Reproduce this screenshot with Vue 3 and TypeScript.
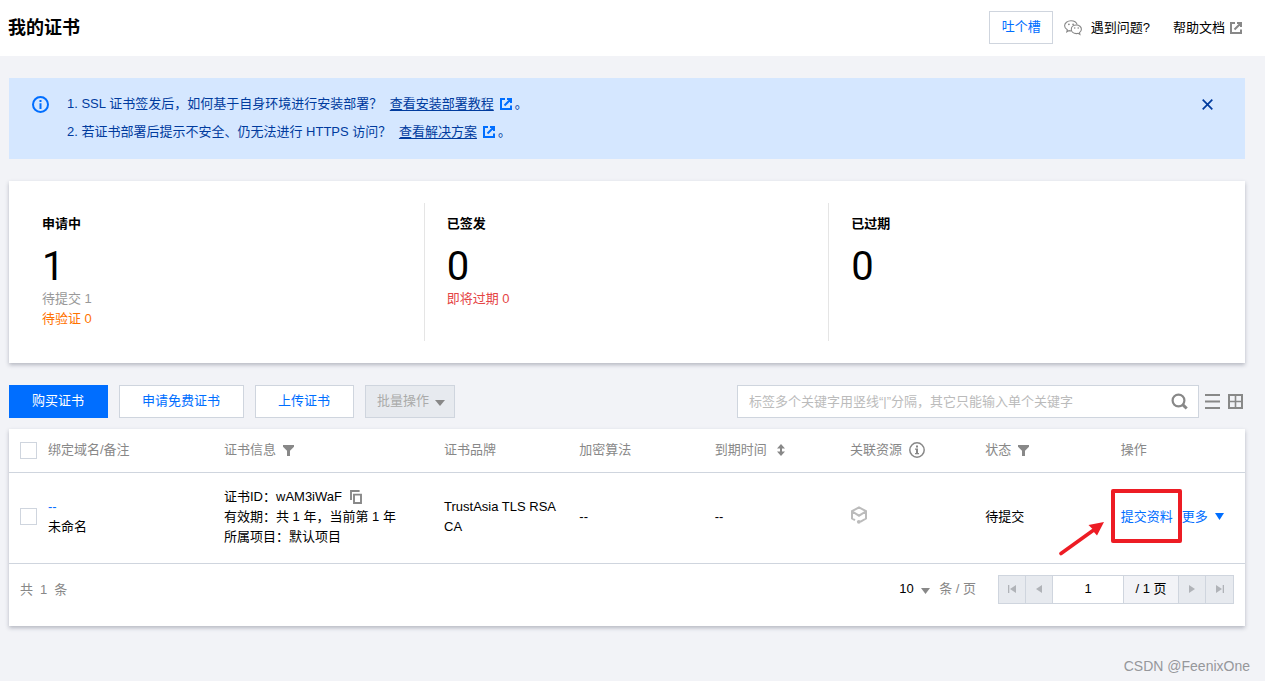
<script setup lang="ts">
import { ref } from 'vue'

interface Stat {
  title: string
  count: number
  notes: { text: string; tone: string }[]
}

interface Column {
  label: string
  icon?: 'filter' | 'sort' | 'info'
}

const stats: Stat[] = [
  {
    title: '申请中',
    count: 1,
    notes: [
      { text: '待提交 1', tone: 'muted' },
      { text: '待验证 0', tone: 'warning' },
    ],
  },
  { title: '已签发', count: 0, notes: [{ text: '即将过期 0', tone: 'danger' }] },
  { title: '已过期', count: 0, notes: [] },
]

const columns: Column[] = [
  { label: '绑定域名/备注' },
  { label: '证书信息', icon: 'filter' },
  { label: '证书品牌' },
  { label: '加密算法' },
  { label: '到期时间', icon: 'sort' },
  { label: '关联资源', icon: 'info' },
  { label: '状态', icon: 'filter' },
  { label: '操作' },
]

const noticeOpen = ref(true)
const keyword = ref('')
const page = ref('1')
const pageSize = ref('10')
</script>

<template>
  <div class="page">
    <header class="header">
      <h1 class="title">我的证书</h1>
      <div class="header-tools">
        <button type="button" class="btn feedback">吐个槽</button>
        <a href="#" class="help wechat">
          <svg width="18" height="16" viewBox="0 0 18 16" fill="none" stroke="#888" stroke-width="1.1">
            <path d="M7.2 10.9c-.9 0-1.5-.1-2.2-.3l-2.2 1.2.5-2C1.6 8.800.6 7.400.6 5.800.6 3 3.5.8 7 .8c3 0 5.500 1.600 6.200 3.900" />
            <path d="M12.400 5c-2.900 0-5.100 1.900-5.100 4.300s2.200 4.300 5.100 4.300c.6 0 1.200-.1 1.700-.3l1.800 1-.4-1.700c1.200-.8 1.900-2 1.900-3.300C17.400 6.900 15.200 5 12.400 5z" />
            <g fill="#888" stroke="none">
              <circle cx="4.900" cy="4.300" r=".9" /><circle cx="9.100" cy="4.300" r=".9" />
              <circle cx="10.700" cy="8" r=".8" /><circle cx="14.200" cy="8" r=".8" />
            </g>
          </svg>
          <span>遇到问题?</span>
        </a>
        <a href="#" class="help">
          <span>帮助文档</span>
          <svg width="12" height="12" viewBox="0 0 12 12" fill="none" stroke="#888" stroke-width="2">
            <path d="M5 1H1v10h10V7.500M7 1h4v4M10.800 1.200 4.500 7.500" />
          </svg>
        </a>
      </div>
    </header>

    <main class="content">
      <section v-if="noticeOpen" class="notice">
        <svg class="notice-icon" width="17" height="17" viewBox="0 0 17 17" fill="none">
          <circle cx="8.500" cy="8.500" r="7.500" stroke="#006eff" stroke-width="2" />
          <path d="M7.500 4h2v2h-2zM7.500 7.200h2v5.800h-2z" fill="#006eff" />
        </svg>
        <div class="notice-text">
          <p>
            1. SSL 证书签发后，如何基于自身环境进行安装部署？
            <a href="#">查看安装部署教程</a>
            <svg class="link-icon" width="12" height="12" viewBox="0 0 12 12" fill="none" stroke="#006eff" stroke-width="2">
              <path d="M5 1H1v10h10V7.500M7 1h4v4M10.800 1.200 4.500 7.500" />
            </svg>。
          </p>
          <p>
            2. 若证书部署后提示不安全、仍无法进行 HTTPS 访问？
            <a href="#">查看解决方案</a>
            <svg class="link-icon" width="12" height="12" viewBox="0 0 12 12" fill="none" stroke="#006eff" stroke-width="2">
              <path d="M5 1H1v10h10V7.500M7 1h4v4M10.800 1.200 4.500 7.500" />
            </svg>。
          </p>
        </div>
        <button type="button" class="close" aria-label="关闭" @click="noticeOpen = false">
          <svg width="11" height="11" viewBox="0 0 11 11" stroke="#003b9e" stroke-width="1.700">
            <path d="M.7.7l9.600 9.600M10.300.7.7 10.300" />
          </svg>
        </button>
      </section>

      <section class="card stats">
        <div v-for="stat in stats" :key="stat.title" class="stat">
          <h2>{{ stat.title }}</h2>
          <div class="count">{{ stat.count }}</div>
          <div v-for="note in stat.notes" :key="note.text" :class="note.tone">{{ note.text }}</div>
        </div>
      </section>

      <div class="toolbar">
        <button type="button" class="btn primary">购买证书</button>
        <button type="button" class="btn">申请免费证书</button>
        <button type="button" class="btn">上传证书</button>
        <button type="button" class="btn batch" disabled>
          批量操作
          <svg width="10" height="6" viewBox="0 0 10 6"><path d="M0 0h10L5 6z" fill="#888" /></svg>
        </button>
        <div class="search">
          <input v-model="keyword" type="text" aria-label="搜索" placeholder="标签多个关键字用竖线“|”分隔，其它只能输入单个关键字" />
          <button type="button" class="icon-btn" aria-label="搜索">
            <svg width="17" height="17" viewBox="0 0 17 17" fill="none" stroke="#888" stroke-width="2.200">
              <circle cx="7.500" cy="7.500" r="5.900" /><path d="m11.700 11.700 4 3.800" stroke-width="3" />
            </svg>
          </button>
        </div>
        <div class="views">
          <button type="button" class="icon-btn" aria-label="列表">
            <svg width="15" height="15" viewBox="0 0 15 15" fill="#888">
              <path d="M0 0h15v2H0zM0 6.500h15v2H0zM0 13h15v2H0z" />
            </svg>
          </button>
          <button type="button" class="icon-btn" aria-label="网格">
            <svg width="15" height="15" viewBox="0 0 15 15" fill="none" stroke="#888">
              <path d="M1 1h13v13H1z" stroke-width="2" /><path d="M7.500 1v13M1 7.500h13" stroke-width="1.600" />
            </svg>
          </button>
        </div>
      </div>

      <section class="card">
        <table>
          <colgroup>
            <col class="col-check" />
            <col class="col-domain" />
            <col class="col-info" />
            <col v-for="n in 6" :key="n" />
          </colgroup>
          <thead>
            <tr>
              <th class="check"><input type="checkbox" aria-label="全选" /></th>
              <th v-for="col in columns" :key="col.label">
                <span class="th">
                  {{ col.label }}
                  <svg v-if="col.icon === 'filter'" width="11" height="11" viewBox="0 0 11 11">
                    <path d="M0 0h11v1.800L7 5.800V11H4V5.800L0 1.800z" fill="#888" />
                  </svg>
                  <svg v-else-if="col.icon === 'sort'" class="sort" width="8" height="12" viewBox="0 0 8 12">
                    <path d="M4 0 8 4.600H5v2.800h3L4 12 0 7.400h3V4.600H0z" fill="#888" />
                  </svg>
                  <svg v-else-if="col.icon === 'info'" width="16" height="16" viewBox="0 0 16 16" fill="none">
                    <circle cx="8" cy="8" r="7.200" stroke="#888" stroke-width="1.500" />
                    <path d="M7 3.500h2v2H7zM6 6.500h3v4.500h1v1.200H6V11h1V7.700H6z" fill="#888" />
                  </svg>
                </span>
              </th>
            </tr>
          </thead>
          <tbody>
            <tr>
              <td class="check"><input type="checkbox" aria-label="选择证书" /></td>
              <td><a href="#">--</a><br />未命名</td>
              <td>
                <div class="cert-id">
                  证书ID：wAM3iWaF
                  <button type="button" class="icon-btn" aria-label="复制">
                    <svg width="12" height="14" viewBox="0 0 12 14" fill="none" stroke="#888" stroke-width="1.900">
                      <path d="M1 10V1h8.600M4 4.600h7v8.400H4z" />
                    </svg>
                  </button>
                </div>
                <div>有效期：共 1 年，当前第 1 年</div>
                <div>所属项目：默认项目</div>
              </td>
              <td>TrustAsia TLS RSA CA</td>
              <td>--</td>
              <td>--</td>
              <td>
                <svg class="resource" width="18" height="18" viewBox="0 0 18 18" fill="none" stroke="#bbb" stroke-width="2">
                  <path d="M5 14.200 2 12.500V5.200L9 1.300l7 3.900v7.300l-5.800 3.400M2.300 5.500 9 9.700l6.700-4.200" />
                  <circle cx="8.800" cy="15.800" r="1.900" fill="#bbb" stroke="none" />
                </svg>
              </td>
              <td>待提交</td>
              <td>
                <div class="actions">
                  <span class="marked">
                    <a href="#">提交资料</a>
                    <span class="mark-box"></span>
                    <svg class="mark-arrow" width="46" height="36" viewBox="0 0 46 36" fill="#ed1c24">
                      <path d="M2 33.500 34 10.500" stroke="#ed1c24" stroke-width="3.600" stroke-linecap="round" />
                      <path d="M45 2 29.500 5l4 4 .5 2 4 4.500z" />
                    </svg>
                  </span>
                  <button type="button" class="more">
                    更多
                    <svg width="9" height="7" viewBox="0 0 9 7"><path d="M0 0h9L4.500 7z" fill="#006eff" /></svg>
                  </button>
                </div>
              </td>
            </tr>
          </tbody>
        </table>

        <footer class="footer">
          <div class="total"><span>共</span><span>1</span><span>条</span></div>
          <label class="size">
            <select v-model="pageSize">
              <option>10</option>
              <option>20</option>
              <option>50</option>
            </select>
            <svg width="9" height="6" viewBox="0 0 9 6"><path d="M0 0h9L4.500 6z" fill="#888" /></svg>
            <span>条 / 页</span>
          </label>
          <nav class="pager" aria-label="分页">
            <button type="button" disabled aria-label="首页">
              <svg width="8" height="8" viewBox="0 0 8 8" fill="#b0b3b8"><path d="M0 0h1.300v8H0zM8 0v8L2 4z" /></svg>
            </button>
            <button type="button" disabled aria-label="上一页">
              <svg width="6" height="8" viewBox="0 0 6 8" fill="#b0b3b8"><path d="M6 0v8L0 4z" /></svg>
            </button>
            <input v-model="page" type="text" aria-label="页码" />
            <span class="pages">/ 1 页</span>
            <button type="button" disabled aria-label="下一页">
              <svg width="6" height="8" viewBox="0 0 6 8" fill="#b0b3b8"><path d="M0 0v8l6-4z" /></svg>
            </button>
            <button type="button" disabled aria-label="末页">
              <svg width="8" height="8" viewBox="0 0 8 8" fill="#b0b3b8"><path d="M6.700 0H8v8H6.700zM0 0v8l6-4z" /></svg>
            </button>
          </nav>
        </footer>
      </section>
    </main>

    <div class="watermark">CSDN @FeenixOne</div>
  </div>
</template>

<style>
body {
  background: #f2f3f7;
}
</style>

<style scoped>
* {
  box-sizing: border-box;
}

.page {
  position: relative;
  min-height: 100vh;
  background: #f2f3f7;
  color: #000;
  font: 13px/20px "Liberation Sans", "Noto Sans CJK SC", sans-serif;
}

svg {
  display: block;
  flex: none;
}

button,
input,
select {
  font: inherit;
  color: inherit;
}

a {
  color: #006eff;
  text-decoration: none;
}

.header {
  display: flex;
  align-items: center;
  justify-content: space-between;
  height: 56px;
  padding: 0 23px 1px 8px;
  background: #fff;
}

.title {
  margin: 0;
  font-size: 18px;
  line-height: 24px;
  font-weight: 700;
}

.header-tools {
  display: flex;
  align-items: center;
}

.help {
  display: flex;
  align-items: center;
  gap: 5px;
  margin-left: 23px;
  color: #000;
}

.wechat {
  gap: 9px;
  margin-left: 11px;
}

.btn {
  display: flex;
  align-items: center;
  justify-content: center;
  height: 33px;
  padding: 0 23px 2px 22px;
  border: 1px solid #cfd5de;
  background: #fff;
  color: #006eff;
}

.feedback {
  padding: 0 11px 2px 12px;
}

.content {
  padding: 22px 20px 0 9px;
}

.notice {
  display: flex;
  align-items: flex-start;
  padding: 12px 32px 13px 23px;
  margin-bottom: 22px;
  background: #d5e7ff;
  color: #003b9e;
}

.notice-icon {
  margin-top: 6px;
}

.notice-text {
  flex: 1;
  margin-left: 18px;
}

.notice-text p {
  margin: 0;
  line-height: 28px;
}

.notice-text a {
  margin-left: 4px;
  color: #003b9e;
  text-decoration: underline;
  text-underline-offset: 2px;
}

.link-icon {
  display: inline-block;
  margin: 0 3px 0 6px;
  vertical-align: -2px;
}

.close {
  padding: 0;
  margin-top: 9px;
  border: 0;
  background: none;
}

.card {
  background: #fff;
  box-shadow: 0 2px 4px rgba(54, 58, 80, 0.32);
}

.stats {
  display: grid;
  grid-template-columns: repeat(3, 1fr);
  padding: 22px 11px;
  margin-bottom: 22px;
}

.stat {
  min-height: 138px;
  padding: 11px 22px 0;
  border-right: 1px solid #e5e5e5;
}

.stat:last-child {
  border-right: 0;
}

.stat h2 {
  margin: 0 0 11px;
  font-size: 13px;
  line-height: 20px;
}

.count {
  font-family: Roboto, sans-serif;
  font-size: 40px;
  line-height: 44px;
}

.muted {
  color: #999;
}

.warning {
  color: #ff7200;
}

.danger {
  color: #e54545;
}

.toolbar {
  display: flex;
  align-items: center;
  gap: 11px;
  margin-bottom: 11px;
}

.primary {
  border-color: #006eff;
  background: #006eff;
  color: #fff;
}

.batch {
  gap: 6px;
  padding: 0 9px 2px 11px;
  background: #e7eaef;
  color: #aaa;
}

.batch svg {
  margin-top: 4px;
}

.search {
  display: flex;
  align-items: center;
  width: 462px;
  height: 33px;
  padding: 0 10px 0 11px;
  margin-left: auto;
  border: 1px solid #cfd5de;
  background: #fff;
}

.search input {
  flex: 1;
  min-width: 0;
  padding: 0;
  border: 0;
  outline: 0;
  background: none;
}

.search input::placeholder {
  color: #bbb;
}

.icon-btn {
  display: flex;
  padding: 0;
  border: 0;
  background: none;
}

.views {
  display: flex;
  gap: 8px;
  margin: 0 2px 0 -5px;
}

table {
  width: 100%;
  border-collapse: collapse;
  table-layout: fixed;
}

.col-check {
  width: 28px;
}

.col-domain {
  width: 176px;
}

.col-info {
  width: 220px;
}

th,
td {
  padding: 14px 11px 16px;
  border-bottom: 1px solid #cfd5de;
  text-align: left;
  vertical-align: middle;
}

th {
  height: 43px;
  padding: 0 11px;
  color: #888;
  font-weight: 400;
}

.check {
  padding-right: 0;
}

.check input {
  display: block;
  width: 17px;
  height: 17px;
  margin: 0;
  border: 1px solid #cfd5de;
  background: #fff;
  appearance: none;
}

.th {
  display: flex;
  align-items: center;
  gap: 7px;
}

.sort {
  margin-left: 3px;
}

.cert-id {
  display: flex;
  align-items: center;
  gap: 8px;
}

.resource {
  margin-bottom: 4px;
}

.actions {
  display: flex;
  align-items: center;
  gap: 9px;
}

.marked {
  position: relative;
}

.mark-box {
  position: absolute;
  inset: -18px -9px -16px -10px;
  border: 4px solid #ed1c24;
  border-radius: 2px;
  pointer-events: none;
}

.mark-arrow {
  position: absolute;
  top: 13px;
  right: 68px;
  pointer-events: none;
}

.more {
  display: flex;
  align-items: center;
  gap: 7px;
  padding: 0;
  border: 0;
  background: none;
  color: #006eff;
}

.footer {
  display: flex;
  align-items: center;
  padding: 11px 11px 22px;
  color: #888;
}

.total {
  display: flex;
  gap: 7px;
  padding-top: 2px;
}

.size {
  display: flex;
  align-items: center;
  margin: 0 22px 0 auto;
}

.size select {
  padding: 0;
  border: 0;
  outline: 0;
  background: none;
  color: #000;
  appearance: none;
}

.size svg {
  margin: 4px 9px 0 7px;
}

.pager {
  display: flex;
  height: 29px;
  border: 1px solid #cfd5de;
}

.pager button {
  display: flex;
  align-items: center;
  justify-content: center;
  width: 27px;
  padding: 0;
  border: 0;
  border-right: 1px solid #cfd5de;
  background: #e7eaef;
}

.pager button:last-child {
  border-right: 0;
}

.pager input {
  width: 70px;
  padding: 0;
  border: 0;
  outline: 0;
  color: #000;
  text-align: center;
}

.pages {
  width: 56px;
  border: 1px solid #cfd5de;
  border-width: 0 1px;
  background: #f2f3f7;
  color: #000;
  line-height: 25px;
  text-align: center;
}

.watermark {
  position: absolute;
  right: 15px;
  bottom: 5px;
  color: #96979b;
  font-size: 14px;
}
</style>
